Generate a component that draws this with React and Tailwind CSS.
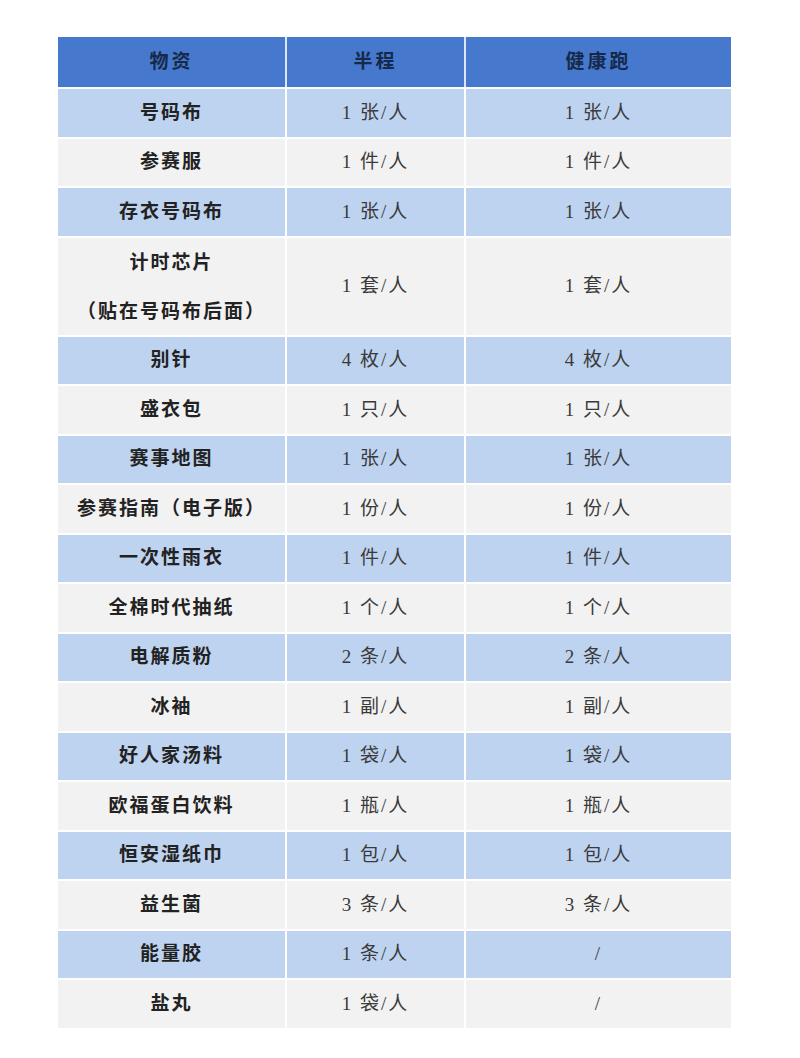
import React from "react";

const rows = [
  ["号码布", "1 张/人", "1 张/人"],
  ["参赛服", "1 件/人", "1 件/人"],
  ["存衣号码布", "1 张/人", "1 张/人"],
  [["计时芯片", "（贴在号码布后面）"], "1 套/人", "1 套/人"],
  ["别针", "4 枚/人", "4 枚/人"],
  ["盛衣包", "1 只/人", "1 只/人"],
  ["赛事地图", "1 张/人", "1 张/人"],
  ["参赛指南（电子版）", "1 份/人", "1 份/人"],
  ["一次性雨衣", "1 件/人", "1 件/人"],
  ["全棉时代抽纸", "1 个/人", "1 个/人"],
  ["电解质粉", "2 条/人", "2 条/人"],
  ["冰袖", "1 副/人", "1 副/人"],
  ["好人家汤料", "1 袋/人", "1 袋/人"],
  ["欧福蛋白饮料", "1 瓶/人", "1 瓶/人"],
  ["恒安湿纸巾", "1 包/人", "1 包/人"],
  ["益生菌", "3 条/人", "3 条/人"],
  ["能量胶", "1 条/人", "/"],
  ["盐丸", "1 袋/人", "/"],
];

const font = { fontFamily: '"Liberation Serif", "Noto Sans CJK SC", serif' };

export default function App() {
  return (
    <div className="w-[800px] h-[1058px] bg-white pt-[37px]" style={font}>
      <div className="ml-[58px] w-[673px] flex flex-col">
        <div className="grid grid-cols-[227px_179px_267px] h-[50px] bg-[#4679cd] text-[#15294a] font-semibold text-[19px] tracking-[3px]">
          <div className="flex items-center justify-center">物资</div>
          <div className="flex items-center justify-center border-l-2 border-[#dbe6f6]">半程</div>
          <div className="flex items-center justify-center border-l-2 border-[#dbe6f6]">健康跑</div>
        </div>
        {rows.map((r, i) => {
          const blue = i % 2 === 0;
          const dbl = Array.isArray(r[0]);
          return (
            <div
              key={i}
              className={
                "grid grid-cols-[227px_179px_267px] border-t-2 border-white text-[19px] " +
                (dbl ? "h-[99px] " : "h-[49.5px] ") +
                (blue ? "bg-[#bed3f0]" : "bg-[#f2f2f2]")
              }
            >
              <div className="flex flex-col items-center justify-center font-semibold text-[#222] tracking-[2px]">
                {dbl ? r[0].map((t) => <div key={t} className="leading-[49px]">{t}</div>) : r[0]}
              </div>
              <div className="flex items-center justify-center border-l-2 border-white text-[#3a3a3a] tracking-[2px]">{r[1]}</div>
              <div className="flex items-center justify-center border-l-2 border-white text-[#3a3a3a] tracking-[2px]">{r[2]}</div>
            </div>
          );
        })}
      </div>
    </div>
  );
}
